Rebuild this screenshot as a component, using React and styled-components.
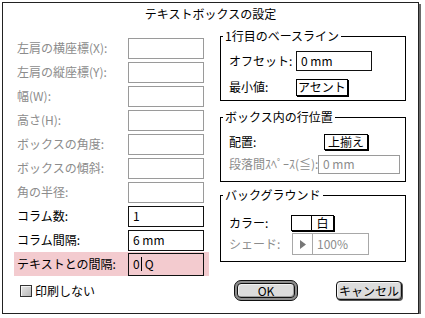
import styled, { createGlobalStyle } from "styled-components";

const GlobalStyle = createGlobalStyle`
  body {
    margin: 0;
    background: #fff;
    font-family: "Noto Sans CJK JP", "Noto Sans", sans-serif;
  }
`;

const Dialog = styled.div`
  box-sizing: border-box;
  width: 417px;
  height: 312px;
  margin: 2px 0 0 2px;
  border: 1px solid #222;
  box-shadow: 2px 2px 0 #6a6a6a;
  background: #fff;
  display: flex;
  flex-direction: column;
  font-size: 12px;
  line-height: 14px;
  color: #000;
`;

const Title = styled.div`
  height: 22px;
  line-height: 22px;
  text-align: center;
`;

const Main = styled.div`
  display: grid;
  grid-template-columns: 195px 186px;
  column-gap: 11px;
  align-items: start;
  margin-top: 4px;
  padding-left: 11px;
  height: 247px;
`;

const LeftCol = styled.div`
  display: flex;
  flex-direction: column;
  padding-top: 7px;
`;

const FieldRow = styled.div`
  display: flex;
  align-items: center;
  height: 24px;
  padding-left: 3px;
  background: ${p => (p.$hl ? "#f3cbcf" : "transparent")};
`;

const Label = styled.span`
  flex: none;
  width: ${p => p.$w}px;
  white-space: nowrap;
  color: ${p => (p.$off ? "#8c8c8c" : "#000")};
`;

const TextBox = styled.div`
  box-sizing: border-box;
  display: flex;
  align-items: center;
  width: ${p => p.$w || 76}px;
  height: ${p => p.$h || 21}px;
  padding-left: 4px;
  border: 1px solid ${p => (p.$off ? "#9a9a9a" : "#111")};
  color: ${p => (p.$off ? "#8c8c8c" : "#000")};
  background: ${p => (p.$hl ? "#f3cbcf" : "#fff")};
  white-space: nowrap;
`;

const Caret = styled.span`
  display: inline-block;
  width: 1px;
  height: 14px;
  margin: 0 3px 0 1px;
  background: #000;
`;

const RightCol = styled.div`
  display: flex;
  flex-direction: column;
`;

const Group = styled.fieldset`
  margin: ${p => p.$mt || 0}px 0 0;
  padding: ${p => p.$pt}px 0 ${p => p.$pb}px 8px;
  border: 1px solid #000;
  min-width: 0;
  display: flex;
  flex-direction: column;
  gap: ${p => p.$gap}px;

  legend {
    margin-left: -6px;
    padding: 0 2px;
    line-height: 14px;
    white-space: nowrap;
  }
`;

const GroupRow = styled.div`
  display: flex;
  align-items: center;
  height: ${p => p.$h}px;
`;

const PopupButton = styled.div`
  box-sizing: border-box;
  display: flex;
  align-items: center;
  justify-content: center;
  width: ${p => p.$w}px;
  height: ${p => p.$h}px;
  border: 1px solid #000;
  box-shadow: 1px 1px 0 #000;
  background: #fff;
  white-space: nowrap;
`;

const ColorField = styled.div`
  display: flex;
  height: 16px;
  border: 1px solid #000;
  box-shadow: 1px 1px 0 #000;
  box-sizing: border-box;
`;

const Swatch = styled.div`
  width: 19px;
  border-right: 1px solid #000;
  background: #fff;
`;

const ColorName = styled.div`
  width: 21px;
  display: flex;
  align-items: center;
  justify-content: center;
`;

const ShadeField = styled.div`
  box-sizing: border-box;
  display: flex;
  width: 77px;
  height: 22px;
  border: 1px solid #a8a8a8;
  color: #8c8c8c;
`;

const ShadeArrow = styled.div`
  width: 19px;
  border-right: 1px solid #a8a8a8;
  display: flex;
  align-items: center;
  justify-content: center;
`;

const ShadeValue = styled.div`
  display: flex;
  align-items: center;
  padding-left: 4px;
`;

const Footer = styled.div`
  display: flex;
  align-items: center;
  padding: 4px 16px 0 17px;
`;

const CheckLabel = styled.label`
  display: flex;
  align-items: center;
  gap: 3px;
  margin-top: 1px;
`;

const CheckBox = styled.span`
  box-sizing: border-box;
  width: 12px;
  height: 12px;
  border: 1px solid #333;
  background: linear-gradient(135deg, #e6e6e6, #b8b8b8);
  box-shadow: inset 1px 1px 0 #f4f4f4;
`;

const Buttons = styled.div`
  display: flex;
  align-items: center;
  gap: 38px;
  margin-left: auto;
`;

const DefaultRing = styled.div`
  box-sizing: border-box;
  width: 64px;
  height: 21px;
  padding: 2px;
  border: 1px solid #111;
  border-radius: 7px;
  background: #8d8d8d;
  display: flex;
`;

const Button = styled.div`
  box-sizing: border-box;
  flex: ${p => (p.$inner ? 1 : "none")};
  width: ${p => (p.$inner ? "auto" : `${p.$w}px`)};
  height: ${p => (p.$inner ? "auto" : `${p.$h}px`)};
  display: flex;
  align-items: center;
  justify-content: center;
  border: 1px solid #111;
  border-radius: 4px;
  background: #dcdcdc;
  box-shadow: ${p =>
    p.$inner
      ? "inset 1px 1px 0 #f2f2f2, inset -1px -1px 0 #a0a0a0"
      : "inset 1px 1px 0 #f6f6f6, inset -1px -1px 0 #a8a8a8, 1px 1px 0 #555"};
  font-size: 12px;
`;

const leftFields = [
  { label: "左肩の横座標(X):", off: true },
  { label: "左肩の縦座標(Y):", off: true },
  { label: "幅(W):", off: true },
  { label: "高さ(H):", off: true },
  { label: "ボックスの角度:", off: true },
  { label: "ボックスの傾斜:", off: true },
  { label: "角の半径:", off: true },
  { label: "コラム数:", value: "1" },
  { label: "コラム間隔:", value: "6 mm" },
];

export default function App() {
  return (
    <>
      <GlobalStyle />
      <Dialog>
        <Title>テキストボックスの設定</Title>
        <Main>
          <LeftCol>
            {leftFields.map(f => (
              <FieldRow key={f.label}>
                <Label $w={111} $off={f.off}>{f.label}</Label>
                <TextBox $off={f.off}>{f.value}</TextBox>
              </FieldRow>
            ))}
            <FieldRow $hl>
              <Label $w={111}>テキストとの間隔:</Label>
              <TextBox $hl $h={23}>0<Caret />Q</TextBox>
            </FieldRow>
          </LeftCol>

          <RightCol>
            <Group $pt={7} $pb={2} $gap={4}>
              <legend>1行目のベースライン</legend>
              <GroupRow $h={22}>
                <Label $w={67}>オフセット:</Label>
                <TextBox $h={20}>0 mm</TextBox>
              </GroupRow>
              <GroupRow $h={22}>
                <Label $w={67}>最小値:</Label>
                <PopupButton $w={52} $h={17}>アセント</PopupButton>
              </GroupRow>
            </Group>

            <Group $mt={9} $pt={9} $pb={7} $gap={3}>
              <legend>ボックス内の行位置</legend>
              <GroupRow $h={18}>
                <Label $w={95}>配置:</Label>
                <PopupButton $w={44} $h={16}>上揃え</PopupButton>
              </GroupRow>
              <GroupRow $h={20}>
                <Label $w={89} $off>段落間ｽﾍﾟｰｽ(≦):</Label>
                <TextBox $off $w={82} $h={19}>0 mm</TextBox>
              </GroupRow>
            </Group>

            <Group $mt={6} $pt={13} $pb={6} $gap={2}>
              <legend>バックグラウンド</legend>
              <GroupRow $h={16}>
                <Label $w={62}>カラー:</Label>
                <ColorField>
                  <Swatch />
                  <ColorName>白</ColorName>
                </ColorField>
              </GroupRow>
              <GroupRow $h={22}>
                <Label $w={63} $off>シェード:</Label>
                <ShadeField>
                  <ShadeArrow>
                    <svg width="6" height="9" viewBox="0 0 6 9">
                      <path d="M0 0 L6 4.5 L0 9 Z" fill="#777" />
                    </svg>
                  </ShadeArrow>
                  <ShadeValue>100%</ShadeValue>
                </ShadeField>
              </GroupRow>
            </Group>
          </RightCol>
        </Main>

        <Footer>
          <CheckLabel>
            <CheckBox />
            印刷しない
          </CheckLabel>
          <Buttons>
            <DefaultRing>
              <Button $inner>OK</Button>
            </DefaultRing>
            <Button $w={66} $h={19}>キャンセル</Button>
          </Buttons>
        </Footer>
      </Dialog>
    </>
  );
}
